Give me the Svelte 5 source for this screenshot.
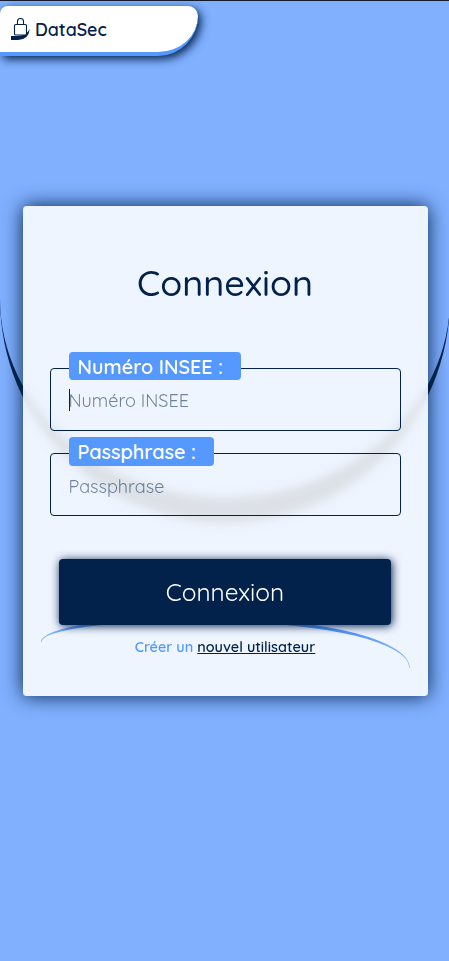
<script>
  let insee = $state('');
  let passphrase = $state('');
</script>

<div class="page">
  <div class="arc"></div>
  <header>
    <svg class="logo" viewBox="0 0 20 24" width="20" height="24">
      <path d="M6.5 7V4.3Q6.5 1.5 9.5 1.5T12.5 4.3V7" fill="none" stroke="#02224b" stroke-width="1.1" />
      <path d="M0 19H6Q15.5 18.6 18.8 12Q17.5 23 7 23H0Z" fill="#02224b" />
      <rect x="3.5" y="7.5" width="12" height="10.5" rx="1.3" fill="#fff" stroke="#02224b" stroke-width="1.1" />
    </svg>
    <span>DataSec</span>
  </header>

  <main>
    <h1>Connexion</h1>
    <div class="field">
      <label class="first" for="insee">Numéro INSEE :</label>
      <input id="insee" bind:value={insee} placeholder="Numéro INSEE" />
      <span class="caret"></span>
    </div>
    <div class="field">
      <label class="second" for="pass">Passphrase :</label>
      <input id="pass" class="low" type="password" bind:value={passphrase} placeholder="Passphrase" />
    </div>
    <div class="actions">
      <svg class="swoosh" viewBox="0 0 369 50" width="369" height="50">
        <defs>
          <linearGradient id="fade">
            <stop offset="0" stop-color="#5599ff" stop-opacity=".7" />
            <stop offset=".12" stop-color="#5599ff" />
            <stop offset=".85" stop-color="#5599ff" />
            <stop offset="1" stop-color="#5599ff" stop-opacity=".7" />
          </linearGradient>
        </defs>
        <path d="M0 22A120 23 0 0 1 120 -1H184A185 49 0 0 1 369 48H368.4A184.4 45.5 0 0 0 184 2.5H120A119.4 19.5 0 0 0 .6 22Z" fill="url(#fade)" />
      </svg>
      <button>Connexion</button>
    </div>
    <p>Créer un <a href="#nouveau">nouvel utilisateur</a></p>
  </main>
</div>

<style>
  .page {
    position: relative;
    box-sizing: border-box;
    height: 961px;
    padding-top: 5px;
    border-top: 1px solid #131a29;
    background: #80b0ff;
    overflow: hidden;
    font-family: Quicksand, Lato, sans-serif;
    color: #02224b;
  }
  .arc {
    position: absolute;
    left: 0;
    top: 73px;
    box-sizing: border-box;
    width: 450px;
    height: 449px;
    border-bottom: 26px solid #02224b;
    border-radius: 50%;
  }
  header {
    position: relative;
    box-sizing: border-box;
    width: 198px;
    height: 50px;
    padding-left: 11px;
    display: flex;
    align-items: center;
    gap: 4px;
    background: #fff;
    border-bottom: 4px solid #5599ff;
    border-radius: 8px 10px 40px 0;
    box-shadow: 3px 3px 10px #02224b;
    font-size: 17.8px;
    font-weight: 600;
  }
  header span { line-height: 22px; }
  main {
    position: relative;
    box-sizing: border-box;
    width: 405px;
    height: 490px;
    margin: 150px 0 0 23px;
    padding: 53px 27px 0;
    border-radius: 4px;
    background: rgba(255, 255, 255, .867);
    backdrop-filter: blur(5px);
    box-shadow: 0 0 20px #02224b;
  }
  h1 {
    margin: 0 1px 39px 0;
    height: 48px;
    line-height: 48px;
    font-size: 36px;
    font-weight: 500;
    text-align: center;
    white-space: nowrap;
  }
  .field {
    position: relative;
    padding-top: 22px;
  }
  label {
    position: absolute;
    left: 19px;
    top: 6px;
    box-sizing: border-box;
    height: 28px;
    padding-left: 8.5px;
    border-radius: 4px;
    background: #5599ff;
    color: #fff;
    font-size: 19.8px;
    font-weight: 600;
    line-height: 29px;
    white-space: nowrap;
  }
  .first { width: 172px; }
  .second { width: 145px; height: 29px; }
  input {
    display: block;
    box-sizing: border-box;
    width: 351px;
    height: 63px;
    padding: 1px 18px 0 17.5px;
    border: 1px solid #02224b;
    border-radius: 4px;
    outline: none;
    background: transparent;
    font: 400 18px Quicksand, Lato, sans-serif;
    color: #02224b;
  }
  .low { padding-top: 3px; }
  input::placeholder { color: rgba(2, 34, 75, .55); opacity: 1; }
  .caret {
    position: absolute;
    left: 19px;
    top: 43px;
    width: 1px;
    height: 22px;
    background: #02224b;
  }
  .actions {
    position: relative;
    margin-top: 43px;
    padding: 0 9px;
  }
  .swoosh {
    position: absolute;
    left: -9px;
    top: 61px;
    overflow: visible;
  }
  button {
    position: relative;
    display: block;
    width: 332px;
    height: 66px;
    padding: 0;
    border: 0;
    border-radius: 4px;
    background: #02224b;
    box-shadow: 1px 1px 10px #02224b;
    color: #fff;
    font: 400 24.4px Quicksand, Lato, sans-serif;
  }
  p {
    position: relative;
    margin: 12px 1px 0 0;
    line-height: 20px;
    font-size: 14.4px;
    font-weight: 600;
    color: #5599ff;
    text-align: center;
    white-space: nowrap;
  }
  a { color: #02224b; }
</style>
